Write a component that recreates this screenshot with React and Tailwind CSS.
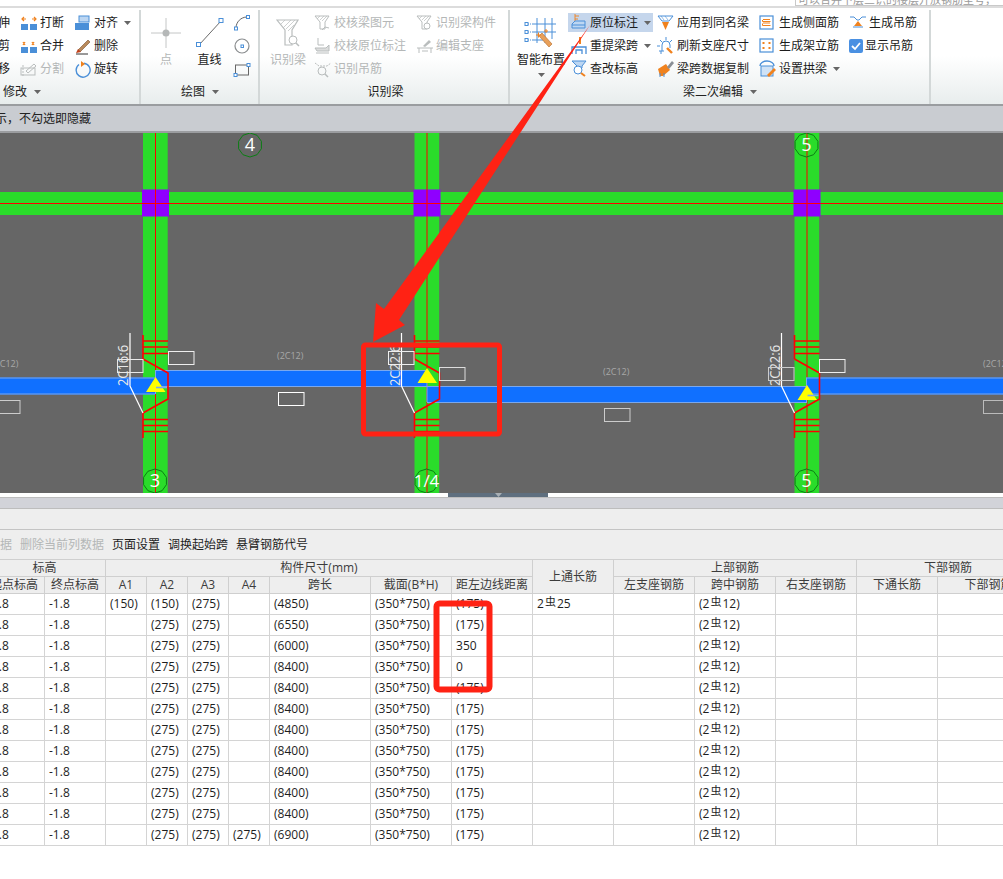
import React from "react";

const Ico = ({ children, w = 18, h = 18 }) => (
  <svg width={w} height={h} viewBox={`0 0 ${w} ${h}`} fill="none" className="shrink-0">{children}</svg>
);
const Caret = ({ c = "#666" }) => (
  <svg width="7" height="4" viewBox="0 0 7 4" className="shrink-0"><path d="M0 0h7L3.5 4z" fill={c} /></svg>
);
const B = "#4a8fd8", O = "#f0821e", G = "#b9bdbd";

const Break = ({ merge }) => (
  <Ico>
    <rect x="1" y="10" width="7" height="6" fill={B} /><rect x="10" y="10" width="7" height="6" fill={B} />
    {merge
      ? <path d="M3 8l2-3M3 5l2 3M12 8l2-3M12 5l2 3" stroke={O} strokeWidth="1.3" />
      : <path d="M2 5h4M4 3l-2 2 2 2M12 5h4M14 3l2 2-2 2" stroke={O} strokeWidth="1.2" />}
  </Ico>
);
const Align = () => (<Ico><rect x="5" y="2" width="10" height="6" fill="#bcd6f2" stroke={B} /><rect x="1" y="9" width="14" height="7" fill={B} /></Ico>);
const Brush = () => (<Ico><path d="M4 13L14 3l2 2L6 15z" fill="#b98a5a" stroke="#7a5230" strokeWidth=".6" /><path d="M2 16l2-4 3 3z" fill="#c0401a" /><path d="M2 17h12" stroke="#333" /></Ico>);
const Split = () => (<Ico><rect x="1" y="8" width="14" height="7" stroke={G} /><path d="M6 11l8-7 2 2-8 7z" stroke={G} /><path d="M3 5v12" stroke={G} strokeDasharray="2 1" /></Ico>);
const Rotate = () => (<Ico><path d="M10 3.2a7 7 0 1 1-5 1.3" stroke={B} strokeWidth="1.4" /><path d="M7 1v6l4-3z" fill={O} /></Ico>);

const Funnel = ({ c = G, s = 1 }) => (
  <g stroke={c} transform={`scale(${s})`}>
    <path d="M1 2h14l-4 6v7H6V8z" />
    <path d="M3 5l3-3M6 6l4-4M8 7l5-5" strokeWidth=".7" />
  </g>
);
const CheckBeam = () => (<Ico><Funnel /><path d="M8 16l3-3 4 1" stroke={G} /></Ico>);
const CheckOrig = () => (<Ico><path d="M4 1v7h6" stroke={G} /><path d="M1 11h11l3-3v6H3z" fill="#dcdddd" stroke={G} /><path d="M2 16h13" stroke={G} /></Ico>);
const Hang = () => (<Ico><path d="M1 3l4 3h8l4-3" stroke={G} strokeDasharray="2 1" /><circle cx="8" cy="11" r="4" stroke={G} /><path d="M11 14l3 3" stroke={G} strokeWidth="1.5" /></Ico>);
const IdComp = () => (<Ico><Funnel /><circle cx="11" cy="12" r="3" stroke={G} fill="#fff" /></Ico>);
const EditSeat = () => (<Ico><path d="M1 11h16M3 11v5M15 11v5M6 14h6" stroke={G} /><path d="M7 9l6-6 2 2-6 5z" fill={G} /></Ico>);

const Orig = () => (<Ico w={19} h={19}><path d="M5 1v8M5 3h4M5 6h3" stroke={O} strokeWidth=".9" /><path d="M2 11l3-3h10v7H2z" fill="#bcd6f2" stroke={B} /><path d="M2 12h13" stroke={B} /></Ico>);
const Reload = () => (<Ico w={19} h={19}><path d="M2 18v-7h14v7M6 18v-4h6v4" stroke={B} strokeWidth="1.3" /><path d="M10 1v7" stroke={O} strokeWidth="2" /></Ico>);
const QueryH = () => (<Ico w={19} h={19}><path d="M2 2h14l-4 5v2H7V7z" fill="#bcd6f2" stroke={B} /><circle cx="8" cy="11" r="4" fill="#fff" stroke={B} /><path d="M11 14l4 3" stroke={O} strokeWidth="2" /></Ico>);
const ApplySame = () => (<Ico><path d="M1 2h15l-4 5H5z" stroke={B} /><path d="M5 8h7l-3.5 8z" fill={O} /><path d="M4 2l3 4M8 2l3 4" stroke={B} strokeWidth=".6" /></Ico>);
const Refresh = () => (<Ico><path d="M9 0v3M3 3l2 2M15 3l-2 2M0 9h3" stroke={B} /><path d="M5 14V8a4 4 0 0 1 8 0v3" stroke={B} /><path d="M2 14h5M4 14v3" stroke={B} /><path d="M10 11l5 5" stroke={O} strokeWidth="2.4" /></Ico>);
const CopyData = () => (<Ico><path d="M1 9l8-5 4 6-7 6H3z" fill={O} /><path d="M10 7l5-6 2 2-5 6z" fill="#8a8f96" /><path d="M3 17v-4M7 17v-4" stroke={B} /></Ico>);
const Side = () => (<Ico w={16} h={16}><rect x="1" y="1" width="13" height="13" stroke={B} strokeWidth="1.2" /><path d="M4 4.5h7M3.5 5v1.5h8M3.5 8.5v2h8M4 8h7" stroke={O} /></Ico>);
const Erect = () => (<Ico w={16} h={16}><rect x="1" y="1" width="13" height="13" stroke={B} strokeWidth="1.2" /><path d="M4.5 4v2M10.5 4v2M4.5 9v2M10.5 9v2" stroke={O} strokeWidth="2" /></Ico>);
const Arch = () => (<Ico><rect x="2" y="6" width="12" height="10" fill="#cfe2f6" stroke={B} /><path d="M1 6a7 5 0 0 1 14 0" stroke={B} strokeWidth="1.4" /><path d="M8 15l7-7 2 2-7 7z" fill={O} /></Ico>);
const HangGen = () => (<Ico><path d="M1 3h4l3 3h2l3-3h4" stroke={B} /><path d="M9 7l4 5H5z" fill={O} /><path d="M4 13h10" stroke={B} /></Ico>);
const Check = () => (<svg width="14" height="14" viewBox="0 0 14 14" className="shrink-0"><rect width="14" height="14" rx="2" fill="#4a90e2" /><path d="M3 7l3 3 5-6" stroke="#fff" strokeWidth="1.8" fill="none" /></svg>);

const Item = ({ icon, label, caret, off, slot = "w-[20px]" }) => (
  <div className={`flex items-center h-[23px] whitespace-nowrap ${off ? "text-[#b4b7b7]" : "text-[#1c1c1c]"}`}>
    <span className={`${slot} shrink-0 flex items-center`}>{icon}</span>
    <span>{label}</span>
    {caret && <span className="ml-[6px] flex"><Caret /></span>}
  </div>
);

const Footer = ({ label, caret, cls = "" }) => (
  <div className={`flex items-center h-[25px] mt-auto text-[#222] gap-[7px] ${cls}`}>
    <span>{label}</span>{caret && <Caret />}
  </div>
);

const Big = ({ cls, icon, label, off, caret }) => (
  <div className={`flex flex-col items-center pt-[6px] ${cls} ${off ? "text-[#b4b7b7]" : "text-[#1c1c1c]"}`}>
    <div className="h-[34px] flex items-center justify-center">{icon}</div>
    <div className="mt-[2px] h-[16px] whitespace-nowrap">{label}</div>
    {caret && <div className="mt-[5px] flex"><Caret /></div>}
  </div>
);

const Group = ({ w, children, foot }) => (
  <div className={`${w} shrink-0 h-[94px] mt-[2px] border-r-2 border-[#d3d8d8] flex flex-col`}>
    <div className="flex h-[70px]">{children}</div>
    {foot}
  </div>
);

const Ribbon = () => (
  <div className="h-[98px] flex items-start bg-gradient-to-b from-white from-50% to-[#e8eded] border-b-2 border-[#9a9da0] text-[12px] leading-4">
    <Group w="w-[141px]" foot={<Footer label="修改" caret cls="pl-[3px]" />}>
      <div className="w-[10px] overflow-hidden flex flex-col items-end pt-[1px]">
        {["伸", "剪", "移"].map((t) => (
          <div key={t} className="h-[23px] flex items-center justify-end w-[10px] text-[#1c1c1c] shrink-0"><span className="shrink-0">{t}</span></div>
        ))}
      </div>
      <div className="ml-[10px] pt-[1px]">
        <Item icon={<Break />} label="打断" />
        <Item icon={<Break merge />} label="合并" />
        <Item icon={<Split />} label="分割" off />
      </div>
      <div className="ml-[10px] pt-[1px]">
        <Item icon={<Align />} label="对齐" caret />
        <Item icon={<Brush />} label="删除" />
        <Item icon={<Rotate />} label="旋转" />
      </div>
    </Group>

    <Group w="w-[119px]" foot={<Footer label="绘图" caret cls="pl-[40px]" />}>
      <Big cls="ml-[9px] w-[32px]" off label="点" icon={
        <Ico w={32} h={32}><path d="M16 1v30M1 16h30" stroke="#c4c6c6" /><circle cx="16" cy="16" r="3.5" fill="#b5b8b8" /></Ico>} />
      <Big cls="ml-[9px] w-[37px]" label="直线" icon={
        <Ico w={32} h={32}><path d="M5 28L27 4" stroke="#444" strokeWidth=".8" /><rect x="2.5" y="25.5" width="4" height="4" fill="#fff" stroke={B} /><rect x="25" y="1.5" width="4" height="4" fill="#fff" stroke={B} /></Ico>} />
      <div className="ml-[5px] pt-[1px]">
        <div className="h-[23px] flex items-center"><Ico><path d="M3 14C3 8 8 3 14 3" stroke="#666" /><rect x="1.5" y="13" width="3" height="3" fill="#fff" stroke={B} /><rect x="13.5" y="1.5" width="3" height="3" fill="#fff" stroke={B} /></Ico></div>
        <div className="h-[23px] flex items-center"><Ico><circle cx="9" cy="9" r="7" stroke="#8a8d8f" strokeWidth="1.2" /><rect x="8" y="8" width="2.5" height="2.5" fill="#fff" stroke={B} /></Ico></div>
        <div className="h-[23px] flex items-center"><Ico><rect x="2.5" y="5" width="13" height="10" stroke="#666" /><rect x="1" y="13.5" width="3" height="3" fill="#fff" stroke={B} /><rect x="14" y="3.5" width="3" height="3" fill="#fff" stroke={B} /></Ico></div>
      </div>
    </Group>

    <Group w="w-[250px]" foot={<Footer label="识别梁" cls="justify-center pl-[3px]" />}>
      <Big cls="ml-[10px] w-[36px]" off label="识别梁" icon={
        <Ico w={24} h={30}><g stroke={G}><path d="M1 2h21l-6 10v15H9V12z" strokeWidth="1.2" /><path d="M4 7l5-5M7 10l8-8M10 11l9-9M12 13l6-6" strokeWidth=".7" /></g><circle cx="17" cy="22" r="4" fill="#fff" stroke={G} /><path d="M20 25l3 3" stroke={G} strokeWidth="1.5" /></Ico>} />
      <div className="ml-[8px] pt-[1px] w-[92px]">
        <Item icon={<CheckBeam />} label="校核梁图元" off />
        <Item icon={<CheckOrig />} label="校核原位标注" off />
        <Item icon={<Hang />} label="识别吊筋" off />
      </div>
      <div className="ml-[10px] pt-[1px]">
        <Item icon={<IdComp />} label="识别梁构件" off />
        <Item icon={<EditSeat />} label="编辑支座" off />
      </div>
    </Group>

    <Group w="w-[421px]" foot={<Footer label="梁二次编辑" caret cls="pl-[173px]" />}>
      <Big cls="ml-[7px] w-[48px]" label="智能布置" caret icon={
        <Ico w={34} h={32}>
          <path d="M8 7h24M8 15h24M8 23h14M13 1v25M21 1v25M28 1v21" stroke={B} />
          <path d="M3 7h4M3 15h4M3 23h4" stroke={B} strokeDasharray="2 1" />
          <rect x="1" y="5.5" width="3" height="3" fill="#fff" stroke={B} /><rect x="1" y="13.5" width="3" height="3" fill="#fff" stroke={B} /><rect x="1" y="21.5" width="3" height="3" fill="#fff" stroke={B} />
          <path d="M18 16l10 11-3 3-10-11z" fill="#e8a05a" stroke="#b56a26" strokeWidth=".6" />
          <path d="M12 18h5M14.5 15.5v5M22 12v4M20 14h4" stroke={O} />
        </Ico>} />
      <div className="ml-[3px] w-[85px] pt-[1px]">
        <div className="pl-[2px] bg-[#c5d6ec] h-[19px] my-[2px] flex items-center whitespace-nowrap text-[#1c1c1c]">
          <span className="w-[20px] shrink-0 flex"><Orig /></span><span>原位标注</span><span className="ml-[6px] flex"><Caret /></span>
        </div>
        <div className="pl-[2px]"><Item icon={<Reload />} label="重提梁跨" caret /></div>
        <div className="pl-[2px]"><Item icon={<QueryH />} label="查改标高" /></div>
      </div>
      <div className="ml-[4px] pt-[1px] w-[92px]">
        <Item icon={<ApplySame />} label="应用到同名梁" />
        <Item icon={<Refresh />} label="刷新支座尺寸" />
        <Item icon={<CopyData />} label="梁跨数据复制" />
      </div>
      <div className="ml-[10px] pt-[1px] w-[80px]">
        <Item icon={<Side />} label="生成侧面筋" />
        <Item icon={<Erect />} label="生成架立筋" />
        <Item icon={<Arch />} label="设置拱梁" caret />
      </div>
      <div className="ml-[10px] pt-[1px]">
        <Item icon={<HangGen />} label="生成吊筋" />
        <Item icon={<Check />} label="显示吊筋" slot="w-[16px]" />
      </div>
    </Group>
  </div>
);

const RED = "#ff0000", GREEN = "#2adc2a", BLUE = "#1070ff", EDGE = "#7aa8ee";

const Octagon = ({ cx, cy, t, fs = 18 }) => {
  const n = 10, r = 12;
  const pts = Array.from({ length: n }, (_, i) => {
    const a = (Math.PI * 2 * i) / n + Math.PI / 10;
    return `${cx + r * Math.cos(a)},${cy + r * Math.sin(a)}`;
  }).join(" ");
  return (
    <g>
      <polygon points={pts} fill="none" stroke="#0c7d14" strokeWidth="1" />
      <text x={cx} y={cy + fs * 0.36} textAnchor="middle" fontSize={fs} fill="#fff" fontFamily="'Open Sans', sans-serif">{t}</text>
    </g>
  );
};

const Node = ({ x, label, tri, notch }) => (
  <g>
    <path d={`M${x} 335V359M${x} 413V438`} stroke={RED} strokeWidth="1.6" />
    <path d={`M${x} 341H${x + 25}M${x} 347H${x + 25}M${x} 353.5H${x + 25}M${x} 419.5H${x + 25}M${x} 425.5H${x + 25}M${x} 431.5H${x + 25}`} stroke={RED} strokeWidth="1.3" />
    <path d={`M${x} 359L${x + 25} 373V399L${x} 413`} stroke={RED} strokeWidth="1.6" fill="none" />
    <path d={`M${x - 13} 333V386L${x} 413`} stroke="#fff" strokeWidth="1.2" fill="none" />
    <polygon points={`${x + 12.5},${tri} ${x + 3},${tri + 15} ${x + 22.5},${tri + 15}`} fill="#ffff00" />
    {notch && <path d={`M${x + 13} ${tri + 10.5}H${x + 24}`} stroke={EDGE} strokeWidth="1.6" />}
    <text transform={`translate(${x - 15},386) rotate(-90)`} fontSize="14" textLength="41" lengthAdjust="spacingAndGlyphs" fill="#e8e8e8" fontFamily="'Open Sans', sans-serif">{label}</text>
  </g>
);

const Box = ({ x, y, c = "#fff" }) => <rect x={x + 0.5} y={y + 0.5} width="25.5" height="13" fill="none" stroke={c} />;
const Dim = ({ x, y, t = "(2C12)" }) => <text x={x} y={y} fontSize="9" fill="#a8a8a8" fontFamily="'Open Sans', sans-serif">{t}</text>;
const Beam = ({ x, w, y }) => (
  <g><rect x={x} y={y} width={w} height="17" fill={BLUE} /><path d={`M${x} ${y + 0.5}H${x + w}M${x} ${y + 16.5}H${x + w}`} stroke={EDGE} /></g>
);

const Canvas = () => (
  <svg width="1003" height="360" viewBox="0 133 1003 360" className="block bg-[#666666]">
    <rect x="0" y="192" width="1003" height="23" fill={GREEN} />
    <path d="M0 203.5H1003" stroke={RED} />
    {[143, 414.5, 794.5].map((x) => (
      <g key={x}>
        <rect x={x} y="133" width="24.7" height="360" fill={GREEN} />
        <rect x={x - 1} y="189.5" width="27" height="27" fill="#8f00ff" />
        <path d={`M${x + 12.5} 133V493M${x - 1} 203.5H${x + 26}`} stroke={RED} />
      </g>
    ))}
    <Beam x={0} w={155} y={377.5} />
    <Beam x={155} w={272} y={370} />
    <Beam x={427} w={380} y={386} />
    <Beam x={806.5} w={197} y={377.5} />
    <path d="M155.5 370V394M427 370V402M806.5 377.5V402" stroke={EDGE} />
    <Node x={143} tri={377} label="2C16:6" notch />
    <Node x={414.5} tri={368} label="2C22:6" />
    <Node x={794.5} tri={385} label="2C22:6" notch />
    <Box x={117} y={359} c="#e8e8e8" /><Box x={168} y={351} c="#eee" /><Box x={278} y={392} /><Box x={-6} y={400} c="#ccc" />
    <Box x={388} y={351} c="#eee" /><Box x={439} y={367} c="#ddd" />
    <Box x={768} y={367} c="#ccc" /><Box x={819} y={359} c="#eee" /><Box x={604} y={408} c="#ccc" /><Box x={983} y={400} c="#bbb" />
    <Dim x={-8} y={367} /><Dim x={277} y={359} /><Dim x={603} y={375} /><Dim x={983} y={367} />
    <Octagon cx={250} cy={145} t="4" />
    <Octagon cx={806.5} cy={145} t="5" />
    <Octagon cx={155} cy={481} t="3" />
    <Octagon cx={426.5} cy={481} t="1/4" fs={17} />
    <Octagon cx={806.5} cy={481} t="5" />
  </svg>
);

const Rebar = () => <span className="inline-block text-[11px] leading-none -translate-y-[2px] mx-[1px] font-['Noto_Sans_CJK_SC',sans-serif]">虫</span>;

const rows = [
  ["(150)", "(150)", "(275)", "", "(4850)", "(175)", true],
  ["", "(275)", "(275)", "", "(6550)", "(175)"],
  ["", "(275)", "(275)", "", "(6000)", "350"],
  ["", "(275)", "(275)", "", "(8400)", "0"],
  ...Array.from({ length: 7 }, () => ["", "(275)", "(275)", "", "(8400)", "(175)"]),
  ["", "(275)", "(275)", "(275)", "(6900)", "(175)"],
];
const th = "border border-[#cfcfcf] font-normal text-center text-[#3c3c3c] whitespace-nowrap overflow-hidden p-0 h-[17px] leading-[16px]";
const td = "border border-[#d4d4d4] px-[4px] py-0 h-[21px] whitespace-nowrap overflow-hidden text-[#1e1e1e] leading-[20px]";
const widths = [61, 61, 41, 41, 41, 41, 101, 81, 81, 81, 81, 81, 81, 81, 102];

const Table = () => (
  <div className="overflow-hidden h-[320px]">
    <table className="table-fixed border-collapse -ml-[17px] w-[1056px] text-[12px]">
      <colgroup>{widths.map((w, i) => <col key={i} style={{ width: w }} />)}</colgroup>
      <thead className="bg-[#eeeeee]">
        <tr>
          <th colSpan={2} className={th}>标高</th>
          <th colSpan={7} className={th}>构件尺寸(mm)</th>
          <th rowSpan={2} className={th}>上通长筋</th>
          <th colSpan={3} className={th}>上部钢筋</th>
          <th colSpan={2} className={th}>下部钢筋</th>
        </tr>
        <tr>
          {["起点标高", "终点标高", "A1", "A2", "A3", "A4", "跨长", "截面(B*H)", "距左边线距离", "左支座钢筋", "跨中钢筋", "右支座钢筋", "下通长筋", "下部钢筋"].map((t) => (
            <th key={t} className={th}>{t}</th>
          ))}
        </tr>
      </thead>
      <tbody>
        {rows.map((r, i) => (
          <tr key={i}>
            <td className={td}>-1.8</td>
            <td className={td}>-1.8</td>
            <td className={td}>{r[0]}</td>
            <td className={td}>{r[1]}</td>
            <td className={td}>{r[2]}</td>
            <td className={td}>{r[3]}</td>
            <td className={td}>{r[4]}</td>
            <td className={td}>(350*750)</td>
            <td className={td}>{r[5]}</td>
            <td className={td}>{r[6] ? <>2<Rebar />25</> : ""}</td>
            <td className={td}></td>
            <td className={td}>(2<Rebar />12)</td>
            <td className={td}></td>
            <td className={td}></td>
            <td className={td}></td>
          </tr>
        ))}
      </tbody>
    </table>
  </div>
);

const Overlay = () => (
  <svg width="1003" height="879" viewBox="0 0 1003 879" className="absolute left-0 top-0 pointer-events-none">
    <polygon points="590,25 399,320 405,325 373,342 376,303 384,309" fill="#ff2214" />
    <rect x="363.5" y="345" width="136" height="89" rx="2" fill="none" stroke="#ff2214" strokeWidth="5" />
    <rect x="436.5" y="603.5" width="53" height="86" rx="3" fill="none" stroke="#ff2214" strokeWidth="6" />
  </svg>
);

export default function App() {
  return (
    <div className="relative w-[1003px] h-[879px] overflow-hidden bg-white font-['Open_Sans','Noto_Sans_CJK_SC',sans-serif] text-[12px]">
      <div className="h-[8px] border-b-2 border-[#dcdcdc] relative">
        <div className="absolute left-[795px] top-0 right-0 h-[6px] border-l border-b border-[#c9c9c9] overflow-hidden text-[11px] leading-[12px] text-[#9a9a9a] pl-[2px] whitespace-nowrap">
          <div className="-mt-[6px]">可以合并下层三识的楼层开放钢筋型号，</div>
        </div>
      </div>
      <Ribbon />
      <div className="h-[27px] bg-[#c9ccd1] border-b-2 border-[#9b9da0] flex items-center text-[#222] leading-4 -ml-[5px]">
        <span className="whitespace-nowrap">示，不勾选即隐藏</span>
      </div>
      <Canvas />
      <div className="h-[4px] bg-white flex pl-[448px]">
        <div className="w-[100px] bg-[#5f6f7f] flex justify-center">
          <svg width="7" height="4" viewBox="0 0 7 4"><path d="M0 0h7L3.5 4z" fill="#a9b0b6" /></svg>
        </div>
      </div>
      <div className="h-[12px] bg-[#d2d3d9] border-y border-[#bdbdbd]" />
      <div className="h-[21px] bg-[#eeeeee] border-b border-[#c4c4c4]" />
      <div className="h-[29px] bg-[#eeeeee] flex items-center gap-[8px] leading-4 whitespace-nowrap text-[#1e1e1e]">
        <span className="text-[#b4b7b7]">据</span>
        <span className="text-[#b4b7b7]">删除当前列数据</span>
        <span>页面设置</span>
        <span>调换起始跨</span>
        <span>悬臂钢筋代号</span>
      </div>
      <Table />
      <Overlay />
    </div>
  );
}
